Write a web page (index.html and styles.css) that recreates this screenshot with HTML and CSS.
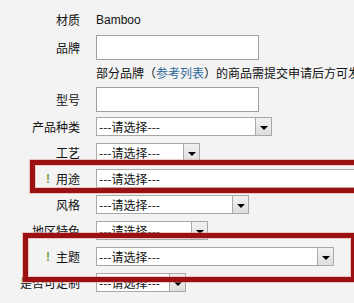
FILE: index.html
```html
<!DOCTYPE html>
<html lang="zh">
<head>
<meta charset="utf-8">
<link rel="stylesheet" href="styles.css">
</head>
<body>
<div class="form">
  <div class="row row-text"><span class="label">材质</span><span class="value">Bamboo</span></div>
  <div class="row row-input"><span class="label">品牌</span><span class="input"></span></div>
  <div class="row row-hint"><span class="label"></span><span class="hint">部分品牌（<a class="link">参考列表</a>）的商品需提交申请后方可发布</span></div>
  <div class="row row-input"><span class="label">型号</span><span class="input"></span></div>
  <div class="row row-select first"><span class="label">产品种类</span><span class="select w-cat"><span class="select-text">---请选择---</span><span class="select-btn"><i class="tri"></i></span></span></div>
  <div class="row row-select"><span class="label">工艺</span><span class="select w-craft"><span class="select-text">---请选择---</span><span class="select-btn"><i class="tri"></i></span></span></div>
  <div class="row row-select"><span class="label"><b class="req">!</b>用途</span><span class="select w-use"><span class="select-text">---请选择---</span><span class="select-btn"><i class="tri"></i></span></span></div>
  <div class="row row-select"><span class="label">风格</span><span class="select w-style"><span class="select-text">---请选择---</span><span class="select-btn"><i class="tri"></i></span></span></div>
  <div class="row row-select"><span class="label">地区特色</span><span class="select w-region"><span class="select-text">---请选择---</span><span class="select-btn"><i class="tri"></i></span></span></div>
  <div class="row row-select"><span class="label"><b class="req">!</b>主题</span><span class="select w-theme"><span class="select-text">---请选择---</span><span class="select-btn"><i class="tri"></i></span></span></div>
  <div class="row row-select"><span class="label">是否可定制</span><span class="select w-custom"><span class="select-text">---请选择---</span><span class="select-btn"><i class="tri"></i></span></span></div>
</div>
<div class="mark mark-use"></div>
<div class="mark mark-theme"></div>
</body>
</html>
```

FILE: styles.css
```css
html, body {
  margin: 0;
  padding: 0;
}
body {
  width: 354px;
  height: 303px;
  overflow: hidden;
  position: relative;
  background: #f3f3f3;
  font-family: "Noto Sans CJK SC", "DejaVu Sans", sans-serif;
  font-size: 12px;
  color: #111;
}
.form {
  display: flex;
  flex-direction: column;
  padding-top: 10px;
}
.row {
  display: flex;
  align-items: center;
  gap: 16px;
  white-space: nowrap;
  line-height: 16px;
}
.label {
  flex: none;
  width: 80px;
  display: flex;
  justify-content: flex-end;
  align-items: center;
  gap: 6px;
  color: #111;
}
.req {
  color: #7b9c4c;
  font-family: "Liberation Sans", sans-serif;
  font-weight: bold;
  font-size: 12px;
}
.row-text {
  height: 20px;
}
.value {
  font-family: "Liberation Sans", sans-serif;
  font-size: 12px;
  color: #111;
}
.row-input {
  height: 25px;
  margin-top: 5px;
}
.row-hint {
  height: 20px;
  margin-top: 3px;
}
.row-hint + .row-input {
  margin-top: 4px;
}
.input {
  flex: none;
  box-sizing: border-box;
  width: 163px;
  height: 25px;
  background: #fff;
  border: 1px solid #9aa0a6;
}
.hint {
  flex: none;
}
.link {
  color: #2f6a9a;
}
.row-select {
  height: 19px;
  margin-top: 7px;
}
.row-select.first {
  margin-top: 5px;
}
.select {
  flex: none;
  box-sizing: border-box;
  height: 19px;
  display: flex;
  background: #fff;
  border: 1px solid #a8a8a8;
}
.select-text {
  flex: 1;
  padding-left: 2px;
  line-height: 17px;
  color: #111;
}
.select-btn {
  flex: none;
  width: 15px;
  border-left: 1px solid #a8a8a8;
  background: linear-gradient(#f2f2f2, #dedede);
  display: flex;
  align-items: center;
  justify-content: center;
}
.tri {
  display: block;
  width: 0;
  height: 0;
  margin-top: 2px;
  border-left: 4px solid transparent;
  border-right: 4px solid transparent;
  border-top: 4px solid #000;
}
.w-cat { width: 176px; }
.w-craft { width: 104px; }
.w-use { width: 300px; }
.w-style { width: 153px; }
.w-region { width: 112px; }
.w-theme { width: 238px; }
.w-custom { width: 90px; }

.mark {
  position: absolute;
  box-sizing: border-box;
  border: 5px solid #9b1111;
  box-shadow: 0 0 0 1px rgba(230, 150, 150, 0.5), inset 0 0 0 1px rgba(230, 150, 150, 0.5);
}
.mark-use {
  left: 30px;
  top: 160px;
  width: 340px;
  height: 33px;
}
.mark-theme {
  left: 23px;
  top: 233px;
  width: 333px;
  height: 49px;
}
```
